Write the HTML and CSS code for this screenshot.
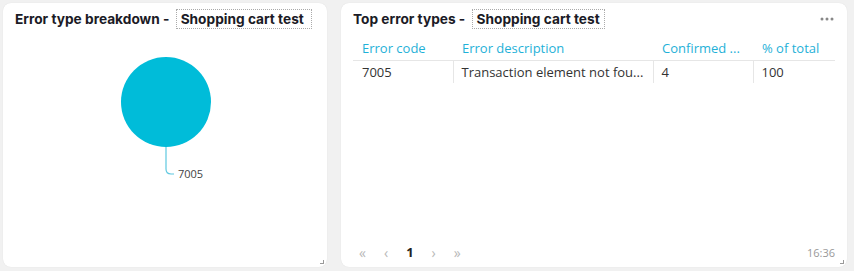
FILE: index.html
```html
<!DOCTYPE html>
<html lang="en">
<head>
    <meta charset="UTF-8">
    <title>Errors</title>
    <link rel="stylesheet" href="styles.css">
</head>
<body>
    <div class="board">
        <div class="card left">
            <div class="head">
                <span class="title">Error type breakdown - </span>
                <span class="sel clip">Shopping cart test</span>
            </div>
            <div class="chart">
                <svg width="320" height="150" viewBox="0 0 320 150">
                    <circle cx="163" cy="59" r="45" fill="#00bcd9"/>
                    <path d="M163 104 L163 126 Q163 131 168 131 L171 131" fill="none" stroke="#5ec8e0" stroke-width="1.2"/>
                    <text x="175" y="135" class="lbl">7005</text>
                </svg>
            </div>
            <span class="grip"></span>
        </div>
        <div class="card right">
            <div class="head">
                <span class="title">Top error types - </span>
                <span class="sel">Shopping cart test</span>
                <svg class="more" width="14" height="4" viewBox="0 0 14 4">
                    <circle cx="2" cy="2" r="1.5" fill="#888"/>
                    <circle cx="7" cy="2" r="1.5" fill="#888"/>
                    <circle cx="12" cy="2" r="1.5" fill="#888"/>
                </svg>
            </div>
            <table class="grid">
                <tr>
                    <th class="c1">Error code</th>
                    <th class="c2">Error description</th>
                    <th class="c3">Confirmed ...</th>
                    <th class="c4">% of total</th>
                </tr>
                <tr>
                    <td>7005</td>
                    <td>Transaction element not fou...</td>
                    <td>4</td>
                    <td>100</td>
                </tr>
            </table>
            <div class="foot">
                <div class="pager">
                    <span>&laquo;</span>
                    <span>&lsaquo;</span>
                    <span class="cur">1</span>
                    <span>&rsaquo;</span>
                    <span>&raquo;</span>
                </div>
                <span class="time">16:36</span>
            </div>
            <span class="grip"></span>
        </div>
    </div>
</body>
</html>
```
FILE: styles.css
```css
body {
    margin: 0;
    background-color: #f1f1f1;
    font-family: Inter, "Noto Sans", sans-serif;
}
.board {
    display: flex;
    gap: 14px;
    padding: 3px 7px 4px 3px;
    height: 264px;
}
.card {
    position: relative;
    background-color: #fff;
    border-radius: 8px;
    box-shadow: 0 0 1px rgba(0, 0, 0, 0.12);
    display: flex;
    flex-direction: column;
}
.left {
    width: 324px;
}
.right {
    flex: 1;
}
.head {
    display: flex;
    align-items: center;
    height: 20px;
    margin-top: 6px;
    padding-left: 12px;
    font-size: 13.7px;
    font-weight: 700;
    color: #1b1b26;
    white-space: nowrap;
}
.title {
    white-space: pre;
}
.sel {
    border: 1px dotted #aaa;
    padding: 0 4px;
    line-height: 18px;
    margin-left: 3px;
}
.clip {
    width: 126px;
    overflow: hidden;
}
.more {
    margin-left: auto;
    margin-right: 13px;
}
.chart {
    padding-top: 14px;
}
.lbl {
    font-family: "Open Sans", sans-serif;
    font-size: 11px;
    fill: #444;
}
.grid {
    margin: 6px 12px 0 12px;
    border-collapse: collapse;
    font-family: "Open Sans", "Noto Sans", sans-serif;
    font-size: 13px;
    width: 482px;
}
.grid th {
    color: #1fb1d8;
    font-weight: 400;
    text-align: left;
    padding: 0 8px 0 9px;
    height: 25px;
    border-bottom: 1px solid #e6e6e6;
}
.grid td {
    color: #333;
    padding: 0 8px 0 8px;
    height: 22px;
    border-left: 1px solid #e6e6e6;
}
.grid td:first-child {
    border-left: none;
    padding-left: 9px;
}
.c1 { width: 83px; }
.c2 { width: 183px; }
.c3 { width: 83px; }
.foot {
    margin-top: auto;
    display: flex;
    align-items: center;
    height: 30px;
    padding: 0 12px 0 18px;
    font-family: "Open Sans", sans-serif;
    font-size: 11px;
    color: #b8b8b8;
}
.pager {
    display: flex;
    gap: 18px;
    font-size: 14px;
}
.cur {
    color: #222;
    font-weight: 700;
    font-size: 13px;
}
.time {
    margin-left: auto;
    color: #999;
}
.grip {
    position: absolute;
    right: 3px;
    bottom: 3px;
    width: 3px;
    height: 3px;
    border-right: 1px solid #999;
    border-bottom: 1px solid #999;
}
```
